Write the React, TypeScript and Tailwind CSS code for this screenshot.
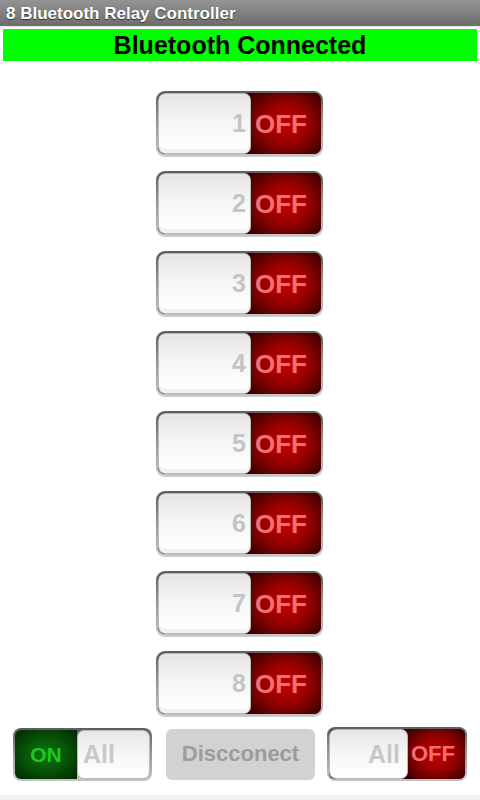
import React from "react";

const font = { fontFamily: '"Liberation Sans", Arial, sans-serif' };

function RelayToggle({ n }: { n: number }) {
  return (
    <div className="w-[167px] h-[65px] rounded-[9px] p-[2px] bg-gradient-to-b from-[#5e5e5e] via-[#9a9a9a] to-[#c4c4c4] shadow-[0_1px_1px_rgba(0,0,0,0.2)]">
      <div className="flex h-full rounded-[7px] overflow-hidden bg-[#3a0000]">
        <div className="w-[93px] h-full rounded-[7px] border border-[#b8b8b8] bg-gradient-to-b from-[#e6e6e6] via-[#f6f6f6] to-[#ffffff] flex items-center justify-end pr-[4px] shadow-[inset_0_-4px_0_#f2f2f2]">
          <span className="text-[25px] font-bold text-[#c4c4c4] leading-none">{n}</span>
        </div>
        <div className="flex-1 h-full flex items-center justify-start pl-[4px] bg-[radial-gradient(ellipse_at_center,#c40000_0%,#9a0000_45%,#5a0000_80%,#300000_100%)] rounded-r-[7px]">
          <span className="text-[26px] font-bold text-[#f07070] leading-none">OFF</span>
        </div>
      </div>
    </div>
  );
}

export default function App() {
  return (
    <div className="w-[480px] h-[800px] bg-white flex flex-col relative overflow-hidden" style={font}>
      <div className="h-[27px] bg-gradient-to-b from-[#949494] to-[#6c6c6c] flex items-center pl-[6px] border-b border-[#e8e8e8]">
        <span className="text-white font-bold text-[17px] leading-none [text-shadow:0_1px_1px_rgba(0,0,0,0.6)]">
          8 Bluetooth Relay Controller
        </span>
      </div>
      <div className="mt-[2px] mx-[3px] h-[32px] bg-[#00ff00] flex items-center justify-center">
        <span className="text-black font-bold text-[25px] leading-none">Bluetooth Connected</span>
      </div>
      <div className="mt-[30px] flex flex-col items-center gap-[15px] pr-[1px]">
        {[1, 2, 3, 4, 5, 6, 7, 8].map((n) => (
          <RelayToggle key={n} n={n} />
        ))}
      </div>
      <div className="mt-[11px] flex items-center pl-[13px]">
        <div className="w-[139px] h-[53px] rounded-[8px] p-[2px] bg-gradient-to-b from-[#5e5e5e] via-[#9a9a9a] to-[#c4c4c4]">
          <div className="flex h-full rounded-[6px] overflow-hidden">
            <div className="w-[62px] h-full flex items-center justify-center bg-[radial-gradient(ellipse_at_center,#0c7a0c_0%,#075207_50%,#022602_100%)]">
              <span className="text-[21px] font-bold text-[#22c422] leading-none">ON</span>
            </div>
            <div className="flex-1 h-full rounded-[7px] border border-[#b8b8b8] bg-gradient-to-b from-[#e6e6e6] via-[#f6f6f6] to-white flex items-center pl-[5px]">
              <span className="text-[25px] font-bold text-[#c8c8c8] leading-none">All</span>
            </div>
          </div>
        </div>
        <div className="ml-[14px] w-[149px] h-[51px] rounded-[6px] bg-[#d2d2d2] flex items-center justify-center">
          <span className="text-[22px] font-bold text-[#9c9c9c] leading-none">Discconect</span>
        </div>
        <div className="ml-[12px] w-[140px] h-[54px] rounded-[8px] p-[2px] bg-gradient-to-b from-[#5e5e5e] via-[#9a9a9a] to-[#c4c4c4]">
          <div className="flex h-full rounded-[6px] overflow-hidden bg-[#3a0000]">
            <div className="w-[79px] h-full rounded-[7px] border border-[#b8b8b8] bg-gradient-to-b from-[#e6e6e6] via-[#f6f6f6] to-white flex items-center justify-end pr-[7px]">
              <span className="text-[25px] font-bold text-[#c8c8c8] leading-none">All</span>
            </div>
            <div className="flex-1 h-full flex items-center justify-start pl-[3px] bg-[radial-gradient(ellipse_at_center,#c40000_0%,#9a0000_45%,#5a0000_80%,#300000_100%)]">
              <span className="text-[22px] font-bold text-[#f07070] leading-none">OFF</span>
            </div>
          </div>
        </div>
      </div>
      <div className="absolute bottom-0 left-0 w-full h-[5px] bg-[#f2f2f2]" />
    </div>
  );
}
